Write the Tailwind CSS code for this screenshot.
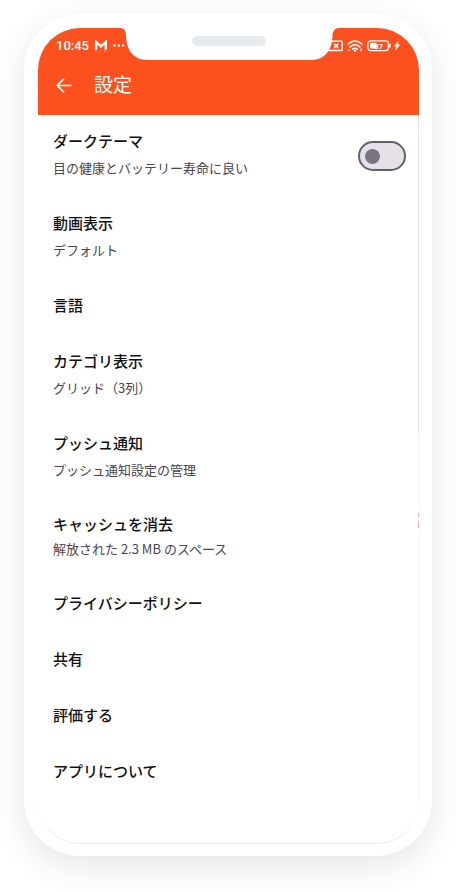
<!DOCTYPE html>
<html lang="ja">
<head>
<meta charset="utf-8">
<meta name="viewport" content="width=device-width, initial-scale=1">
<title>設定</title>
<script src="https://cdn.jsdelivr.net/npm/@tailwindcss/browser@4"></script>
</head>
<body class="flex min-h-screen flex-col bg-white px-6 pt-3.5 pb-9 font-['Noto_Sans_CJK_JP',sans-serif] text-[#111114]">
<div class="flex flex-1 flex-col rounded-[56px] bg-white py-3.5 pr-[13px] pb-3 pl-3.5 shadow-[0_10px_34px_rgba(0,0,0,0.10)]">
  <div class="relative flex flex-1 flex-col overflow-hidden rounded-[42px] border-b border-[#e9e9eb]">

    <header class="bg-[#fc501e] text-white">
      <div class="flex h-9 items-center justify-between pr-[18px] pl-[18px]">
        <div class="flex items-center gap-[5px]">
          <span class="font-[Roboto,sans-serif] text-[13px] leading-4 font-medium">10:45</span>
          <svg class="h-3 w-3.5" viewBox="0 0 14 12" aria-hidden="true"><path d="M2.200 9.500V2L7 6.400 11.800 2V9.500" fill="none" stroke="#fff" stroke-width="2.300"/><path d="M1 11h2M5 11h1M10 11h2" stroke="#fff" stroke-opacity=".5" stroke-width="1"/></svg>
          <svg class="h-3 w-3" viewBox="0 0 12 12" aria-hidden="true"><g fill="#fff"><circle cx="1.500" cy="5.500" r="1.200"/><circle cx="5.800" cy="5.500" r="1.200"/><circle cx="10.100" cy="5.500" r="1.200"/></g></svg>
        </div>
        <div class="flex items-center gap-1">
          <svg class="h-3 w-4" viewBox="0 0 16 12" aria-hidden="true"><rect x="1.800" y="1.300" width="13.400" height="9.200" rx="1" fill="none" stroke="#fff" stroke-width="1.400"/><path d="M7 3.700l4.400 4.400M11.400 3.700L7 8.100" stroke="#fff" stroke-width="1.500"/></svg>
          <svg class="h-3 w-4" viewBox="0 0 16 12" aria-hidden="true"><g fill="none" stroke="#fff" stroke-width="1.500" stroke-linecap="round"><path d="M1 4.200Q8-2.200 15 4.200M3.200 6.900Q8 2.600 12.800 6.900M5.600 9.200Q8 7.200 10.400 9.200"/></g><circle cx="8" cy="10.800" r="1.200" fill="#fff"/><path d="M1 10.800l2-1.400M14 8.800v2.600M13 9.800l1-1 1 1" stroke="#fff" stroke-width="1"/></svg>
          <svg class="h-3 w-6" viewBox="0 0 24 12" aria-hidden="true"><rect x=".800" y=".800" width="20.600" height="9.800" rx="2.800" fill="none" stroke="#fff" stroke-width="1.300"/><path d="M22.800 3.800v3.800" stroke="#fff" stroke-width="1.400"/><rect x="3" y="2.800" width="6.500" height="5.800" rx="1" fill="#fff"/><text x="7" y="8.600" font-family="Roboto, sans-serif" font-size="8" font-weight="700" fill="#fff">37</text></svg>
          <svg class="-ml-0.5 h-3 w-2" viewBox="0 0 8 12" aria-hidden="true"><path d="M5.600 .6L1 6.600h2.400L2.300 10.800 7.200 4.600H4.700z" fill="#fff"/></svg>
        </div>
      </div>
      <div class="flex h-[51px] items-start gap-5 pt-2 pl-4">
        <button type="button" aria-label="戻る" class="flex h-6 w-5 items-center justify-center">
          <svg class="h-5 w-5" viewBox="0 0 20 20" fill="none" stroke="#fff" stroke-width="1.700" aria-hidden="true"><path d="M17.500 11.500H3.500M10 4.700L3.200 11.500l6.800 6.800"/></svg>
        </button>
        <h1 class="text-[19px] leading-6">設定</h1>
      </div>
    </header>

    <svg class="absolute top-0 left-1/2 h-8 w-[220px] -translate-x-1/2" viewBox="0 0 220 32" aria-hidden="true">
      <path d="M0 0C5 0 7 2.500 7 7C7.500 21 13 32 29 32H192C206 32 213 22 213.500 8C213.500 3 216 0 220 0Z" fill="#fff"/>
      <rect x="73" y="8" width="74" height="10" rx="5" fill="#e7eaef"/>
    </svg>

    <div class="absolute top-[87px] right-0 bottom-10 flex w-px flex-col bg-[#f6f6f7]" aria-hidden="true">
      <span class="h-[318px] bg-[#e3e2e6]"></span>
      <span class="mt-20 h-1 bg-[#ffa3b8]"></span>
      <span class="mt-1 h-[7px] bg-[#ffa3b8]"></span>
    </div>

    <main>
      <ul class="pr-[13px] pl-[15px]">
        <li class="flex items-center justify-between">
          <label for="dark" class="flex flex-col gap-1 pt-3.5 pb-[18px]"><span class="text-[15px] leading-6 font-medium">ダークテーマ</span><span class="text-[13px] leading-[22px] text-[#49464f]">目の健康とバッテリー寿命に良い</span></label>
          <input id="dark" type="checkbox" role="switch" class="h-[30px] w-12 appearance-none rounded-full border-2 border-[#65606a] bg-[#e6e0e9] before:mt-[6px] before:ml-[5px] before:block before:size-[15px] before:rounded-full before:bg-[#79747e] before:content-[''] checked:before:ml-6">
        </li>
        <li><a href="#video" class="flex flex-col gap-1 pt-3.5 pb-[18px]"><span class="text-[15px] leading-6 font-medium">動画表示</span><span class="text-[13px] leading-[22px] text-[#49464f]">デフォルト</span></a></li>
        <li><a href="#language" class="flex flex-col pt-3.5 pb-[18px]"><span class="text-[15px] leading-6 font-medium">言語</span></a></li>
        <li><a href="#category" class="flex flex-col gap-1 pt-3.5 pb-[18px]"><span class="text-[15px] leading-6 font-medium">カテゴリ表示</span><span class="text-[13px] leading-[22px] text-[#49464f]">グリッド（3列）</span></a></li>
        <li><a href="#push" class="flex flex-col gap-1 pt-3.5 pb-[17px]"><span class="text-[15px] leading-6 font-medium">プッシュ通知</span><span class="text-[13px] leading-[22px] text-[#49464f]">プッシュ通知設定の管理</span></a></li>
        <li><button type="button" class="flex w-full flex-col gap-0.5 pt-3.5 pb-[17px] text-left"><span class="text-[15px] leading-6 font-medium">キャッシュを消去</span><span class="text-[13px] leading-[22px] text-[#49464f]">解放された 2.3 MB のスペース</span></button></li>
        <li><a href="#privacy" class="flex flex-col pt-3.5 pb-[18px]"><span class="text-[15px] leading-6 font-medium">プライバシーポリシー</span></a></li>
        <li><a href="#share" class="flex flex-col pt-3.5 pb-[18px]"><span class="text-[15px] leading-6 font-medium">共有</span></a></li>
        <li><a href="#rate" class="flex flex-col pt-3.5 pb-[18px]"><span class="text-[15px] leading-6 font-medium">評価する</span></a></li>
        <li><a href="#about" class="flex flex-col pt-3.5 pb-[18px]"><span class="text-[15px] leading-6 font-medium">アプリについて</span></a></li>
      </ul>
    </main>
  </div>
</div>
</body>
</html>
